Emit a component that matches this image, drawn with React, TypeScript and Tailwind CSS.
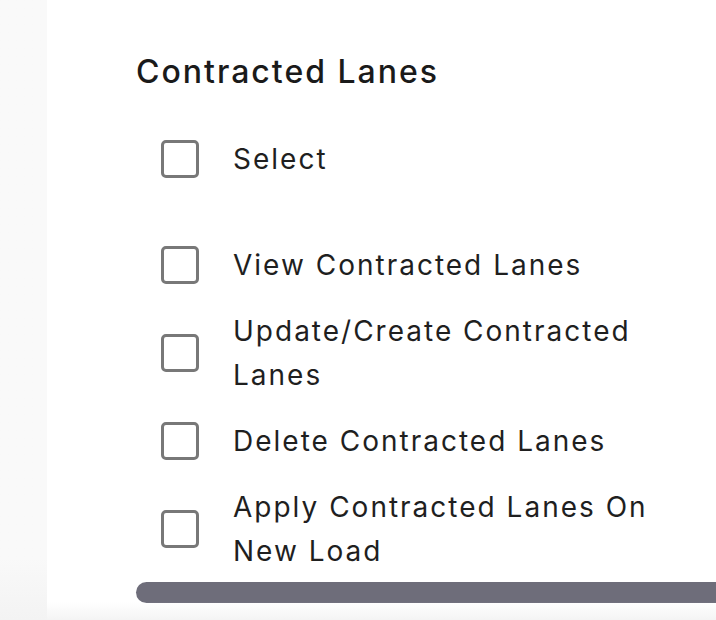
import React from "react";

type Perm = {
    label: string;
};

const perms: Perm[] = [
    { label: "View Contracted Lanes" },
    { label: "Update/Create Contracted Lanes" },
    { label: "Delete Contracted Lanes" },
    { label: "Apply Contracted Lanes On New Load" },
];

const Box = () => (
    <span className="block w-[38px] h-[38px] shrink-0 rounded-[5px] border-[3px] border-[#787878] bg-white" />
);

const Row = ({ label }: Perm) => (
    <label className="flex items-center pl-[25px] cursor-pointer">
        <Box />
        <span className="ml-[34px] w-[440px] text-[28px] leading-[44px] tracking-[2px] text-[#1f1f1f]">{label}</span>
    </label>
);

const App = () => (
    <div className="flex h-[620px] w-[716px] overflow-hidden bg-white" style={{ fontFamily: "Inter, 'Noto Sans', sans-serif" }}>
        <div className="w-[47px] shrink-0 bg-gradient-to-b from-[#f9f9f9] from-90% to-[#f3f3f3]" />

        <div className="relative flex-1 flex flex-col pl-[89px] pt-[52px]">
            <h2 className="text-[32px] leading-[40px] font-medium text-[#1a1a1a] tracking-[2px]">Contracted Lanes</h2>

            <div className="mt-[45px]">
                <Row label="Select" />
            </div>

            <div className="mt-[62px] flex flex-col gap-[22px]">
                {perms.map((p) => (
                    <Row key={p.label} label={p.label} />
                ))}
            </div>

            <div className="mt-[9px] h-[21px] w-[700px] shrink-0 rounded-full bg-[#6e6d7a]" />

            <div className="absolute left-0 right-0 bottom-0 h-[18px] bg-gradient-to-b from-transparent to-[#f4f4f4]" />
        </div>
    </div>
);

export default App;
